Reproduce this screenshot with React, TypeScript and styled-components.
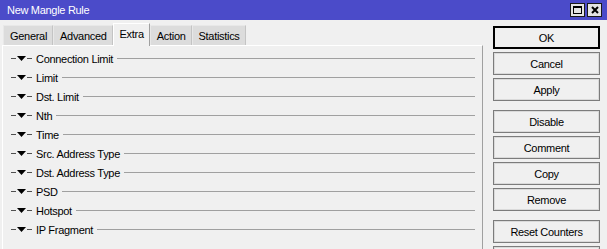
import React from "react";
import styled, { createGlobalStyle } from "styled-components";

const Global = createGlobalStyle`
  html, body {
    margin: 0;
    padding: 0;
    background: #f0f0f0;
  }
  body {
    font-family: "Liberation Sans", Arial, sans-serif;
    font-size: 11px;
    letter-spacing: -0.3px;
    color: #000;
  }
`;

const Window = styled.div`
  width: 607px;
  height: 249px;
  background: #f0f0f0;
  overflow: hidden;
  display: flex;
  flex-direction: column;
`;

const TitleBar = styled.div`
  height: 20px;
  flex: none;
  background: #4b4bc9;
  color: #fff;
  display: flex;
  align-items: center;
  padding: 0 5px 0 7px;
`;

const Title = styled.div`
  flex: 1;
  line-height: 20px;
`;

const TitleButtons = styled.div`
  display: flex;
  gap: 2px;
  align-items: center;
`;

const TitleButton = styled.div`
  width: 15px;
  height: 14px;
  box-sizing: border-box;
  background: #e4e4e4;
  border: 1px solid #1a1a1a;
  display: flex;
  align-items: center;
  justify-content: center;
`;

const Body = styled.div`
  flex: 1;
  display: flex;
  min-height: 0;
`;

const Main = styled.div`
  width: 483px;
  flex: none;
  display: flex;
  flex-direction: column;
`;

const TabBar = styled.div`
  height: 25px;
  flex: none;
  display: flex;
  align-items: flex-end;
  padding-left: 3px;
  position: relative;
  z-index: 1;
`;

const Tab = styled.div<{ $active?: boolean }>`
  box-sizing: border-box;
  height: ${(p) => (p.$active ? "23px" : "20px")};
  margin-bottom: ${(p) => (p.$active ? "-1px" : "0")};
  padding: ${(p) => (p.$active ? "0 5px 2px 6px" : "0 5px 0 6px")};
  display: flex;
  align-items: center;
  background: ${(p) => (p.$active ? "#f0f0f0" : "#dcdcdc")};
  border-top: 1px solid ${(p) => (p.$active ? "#ffffff" : "#e8e8e8")};
  border-left: 1px solid ${(p) => (p.$active ? "#ffffff" : "#e8e8e8")};
  border-right: 1px solid ${(p) => (p.$active ? "#a0a0a0" : "#c4c4c4")};
  white-space: nowrap;
`;

const Panel = styled.div`
  flex: 1;
  border-top: 1px solid #ffffff;
  border-left: 1px solid #ffffff;
  border-right: 1px solid #a0a0a0;
  margin-left: 2px;
  padding-top: 3px;
`;

const Row = styled.div`
  height: 19px;
  display: flex;
  align-items: center;
  padding: 0 7px 0 8px;
`;

const Dash = styled.div<{ $w: number }>`
  width: ${(p) => p.$w}px;
  height: 1px;
  background: #505050;
  flex: none;
`;

const Arrow = styled.svg`
  width: 9px;
  height: 5px;
  margin: 0 1px;
  flex: none;
`;

const Label = styled.span`
  margin: 0 4px;
  white-space: nowrap;
`;

const Rule = styled.div`
  flex: 1;
  height: 1px;
  background: #a0a0a0;
`;

const Side = styled.div`
  width: 107px;
  margin-left: 10px;
  padding-top: 6px;
  display: flex;
  flex-direction: column;
`;

const Button = styled.div<{ $primary?: boolean; $space?: number }>`
  height: 23px;
  flex: none;
  box-sizing: border-box;
  margin-top: ${(p) => p.$space ?? 3}px;
  background: #f0f0f0;
  border: 1px solid ${(p) => (p.$primary ? "#000" : "#7c7c7c")};
  box-shadow: inset 0 0 0 1px ${(p) => (p.$primary ? "#000" : "#dadada")};
  display: flex;
  align-items: center;
  justify-content: center;
  white-space: nowrap;
`;

const sections = [
  "Connection Limit",
  "Limit",
  "Dst. Limit",
  "Nth",
  "Time",
  "Src. Address Type",
  "Dst. Address Type",
  "PSD",
  "Hotspot",
  "IP Fragment",
];

const tabs = ["General", "Advanced", "Extra", "Action", "Statistics"];

const buttons: { label: string; space?: number; primary?: boolean }[] = [
  { label: "OK", space: 0, primary: true },
  { label: "Cancel" },
  { label: "Apply" },
  { label: "Disable", space: 9 },
  { label: "Comment" },
  { label: "Copy" },
  { label: "Remove" },
  { label: "Reset Counters", space: 9 },
  { label: "" },
];

export default function App() {
  return (
    <>
      <Global />
      <Window>
        <TitleBar>
          <Title>New Mangle Rule</Title>
          <TitleButtons>
            <TitleButton>
              <svg width="9" height="8" viewBox="0 0 9 8">
                <rect x="0.5" y="0.5" width="8" height="7" fill="none" stroke="#000" />
                <rect x="0" y="0" width="9" height="2" fill="#000" />
              </svg>
            </TitleButton>
            <TitleButton>
              <svg width="8" height="8" viewBox="0 0 8 8">
                <path d="M1 1 L7 7 M7 1 L1 7" stroke="#000" strokeWidth="2" />
              </svg>
            </TitleButton>
          </TitleButtons>
        </TitleBar>
        <Body>
          <Main>
            <TabBar>
              {tabs.map((t) => (
                <Tab key={t} $active={t === "Extra"}>
                  {t}
                </Tab>
              ))}
            </TabBar>
            <Panel>
              {sections.map((s) => (
                <Row key={s}>
                  <Dash $w={5} />
                  <Arrow viewBox="0 0 9 5">
                    <polygon points="0,0 9,0 4.5,5" fill="#000" />
                  </Arrow>
                  <Dash $w={5} />
                  <Label>{s}</Label>
                  <Rule />
                </Row>
              ))}
            </Panel>
          </Main>
          <Side>
            {buttons.map((b, i) => (
              <Button key={i} $primary={b.primary} $space={b.space}>
                {b.label}
              </Button>
            ))}
          </Side>
        </Body>
      </Window>
    </>
  );
}
